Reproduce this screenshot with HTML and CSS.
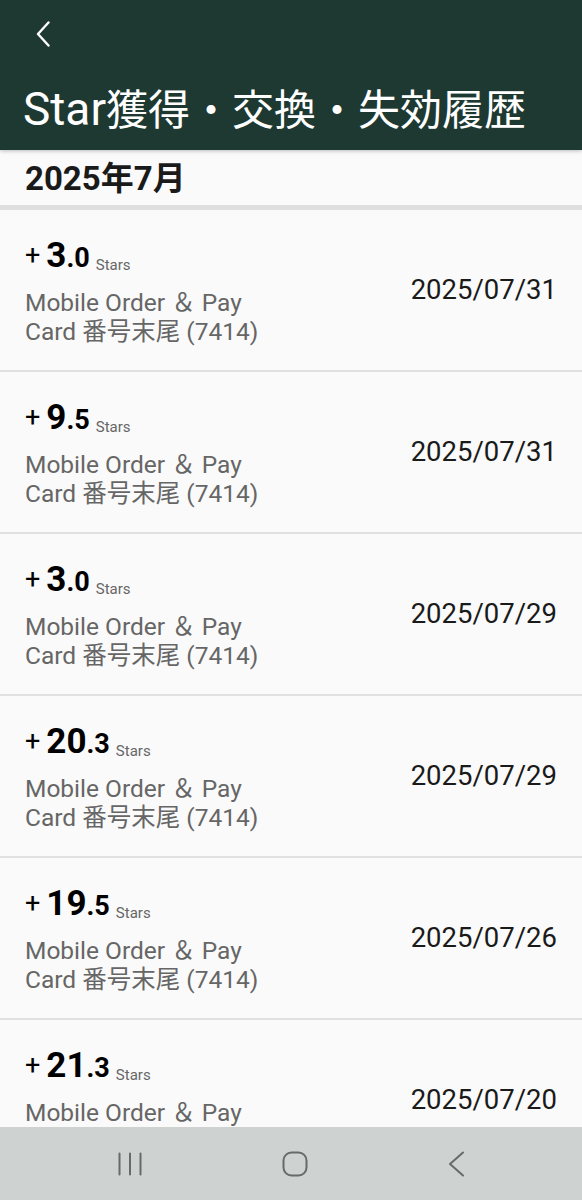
FILE: index.html
```html
<!DOCTYPE html>
<html lang="ja">
<head>
	<title>Star獲得・交換・失効履歴</title>
	<meta charset="UTF-8">
	<meta name="viewport" content="width=device-width, initial-scale=1">
	<link rel="stylesheet" href="styles.css">
</head>
<body>
	<div id="app">
		<header id="topbar">
			<div class="back">
				<svg width="14" height="26" viewBox="0 0 14 26"><path d="M12.5 1.5 L2 13 L12.5 24.5" fill="none" stroke="#fff" stroke-width="2.4" stroke-linecap="round" stroke-linejoin="round"/></svg>
			</div>
			<h1><span class="latin">Star</span>獲得・交換・失効履歴</h1>
		</header>
		<div id="month">2025年7月</div>
		<div id="history">
			<div class="row">
				<div class="info">
					<div class="amount"><span class="plus">+</span><span class="int">3</span><span class="dec">.0</span><span class="unit">Stars</span></div>
					<div class="desc">Mobile Order ＆ Pay<br>Card 番号末尾 (7414)</div>
				</div>
				<div class="date">2025/07/31</div>
			</div>
			<div class="row">
				<div class="info">
					<div class="amount"><span class="plus">+</span><span class="int">9</span><span class="dec">.5</span><span class="unit">Stars</span></div>
					<div class="desc">Mobile Order ＆ Pay<br>Card 番号末尾 (7414)</div>
				</div>
				<div class="date">2025/07/31</div>
			</div>
			<div class="row">
				<div class="info">
					<div class="amount"><span class="plus">+</span><span class="int">3</span><span class="dec">.0</span><span class="unit">Stars</span></div>
					<div class="desc">Mobile Order ＆ Pay<br>Card 番号末尾 (7414)</div>
				</div>
				<div class="date">2025/07/29</div>
			</div>
			<div class="row">
				<div class="info">
					<div class="amount"><span class="plus">+</span><span class="int">20</span><span class="dec">.3</span><span class="unit">Stars</span></div>
					<div class="desc">Mobile Order ＆ Pay<br>Card 番号末尾 (7414)</div>
				</div>
				<div class="date">2025/07/29</div>
			</div>
			<div class="row">
				<div class="info">
					<div class="amount"><span class="plus">+</span><span class="int">19</span><span class="dec">.5</span><span class="unit">Stars</span></div>
					<div class="desc">Mobile Order ＆ Pay<br>Card 番号末尾 (7414)</div>
				</div>
				<div class="date">2025/07/26</div>
			</div>
			<div class="row">
				<div class="info">
					<div class="amount"><span class="plus">+</span><span class="int">21</span><span class="dec">.3</span><span class="unit">Stars</span></div>
					<div class="desc">Mobile Order ＆ Pay<br>Card 番号末尾 (7414)</div>
				</div>
				<div class="date">2025/07/20</div>
			</div>
		</div>
		<nav id="navbar">
			<svg width="24" height="24" viewBox="0 0 24 24"><path d="M1.5 1.5 V22.5 M12 1.5 V22.5 M22.5 1.5 V22.5" stroke="#666a69" stroke-width="2" stroke-linecap="round"/></svg>
			<svg width="26" height="26" viewBox="0 0 26 26"><rect x="1.5" y="1.5" width="23" height="23" rx="8" fill="none" stroke="#666a69" stroke-width="2"/></svg>
			<svg width="18" height="26" viewBox="0 0 18 26"><path d="M16 1.5 L3 13 L16 24.5" fill="none" stroke="#666a69" stroke-width="2" stroke-linecap="round" stroke-linejoin="round"/></svg>
		</nav>
	</div>
</body>
</html>
```

FILE: styles.css
```css
html, body {
	margin: 0;
	padding: 0;
}
body {
	font-family: "Roboto", "Noto Sans CJK JP", sans-serif;
	background: #fafafa;
}
#app {
	display: flex;
	flex-direction: column;
	height: 1200px;
	overflow: hidden;
}
#topbar {
	height: 150px;
	flex: none;
	background: #1e3932;
	color: #fff;
	box-sizing: border-box;
	padding-top: 21px;
	position: relative;
	z-index: 1;
	box-shadow: 0 1px 4px rgba(0, 0, 0, 0.25);
}
.back {
	margin-left: 36px;
	height: 26px;
}
.back svg {
	display: block;
}
#topbar h1 {
	margin: 37px 0 0 23px;
	font-size: 42px;
	font-weight: 400;
	line-height: 50px;
	height: 50px;
	white-space: nowrap;
}
#topbar .latin {
	font-size: 46px;
}
#month {
	flex: none;
	height: 60px;
	box-sizing: border-box;
	padding: 2px 0 0 25px;
	line-height: 53px;
	font-size: 33px;
	font-weight: 700;
	color: #1a1a1a;
	border-bottom: 5px solid #dfdfdf;
}
#history {
	flex: 1;
	overflow: hidden;
}
.row {
	display: flex;
	align-items: center;
	justify-content: space-between;
	height: 162px;
	box-sizing: border-box;
	padding: 0 25px 0 25px;
	border-bottom: 2px solid #e1e1e1;
}
.info {
	padding-top: 1px;
}
.amount {
	display: flex;
	align-items: baseline;
	height: 40px;
	line-height: 40px;
	color: #000;
	white-space: nowrap;
}
.plus {
	font-size: 27px;
	font-weight: 400;
	margin-right: 6px;
	transform: translateY(-3px);
}
.int {
	font-size: 35px;
	font-weight: 700;
}
.dec {
	font-size: 27px;
	font-weight: 700;
}
.unit {
	font-size: 15px;
	color: #666;
	margin-left: 6px;
	transform: translateY(3px);
}
.desc {
	margin-top: 12px;
	font-size: 24.5px;
	line-height: 29px;
	height: 58px;
	color: #666;
	white-space: nowrap;
}
.date {
	font-size: 27.5px;
	line-height: 32px;
	color: #1a1a1a;
}
#navbar {
	flex: none;
	height: 73px;
	background: #ced2d1;
	display: flex;
	align-items: center;
	justify-content: space-between;
	padding: 0 117px 0 118px;
}
#navbar svg {
	display: block;
}
```
